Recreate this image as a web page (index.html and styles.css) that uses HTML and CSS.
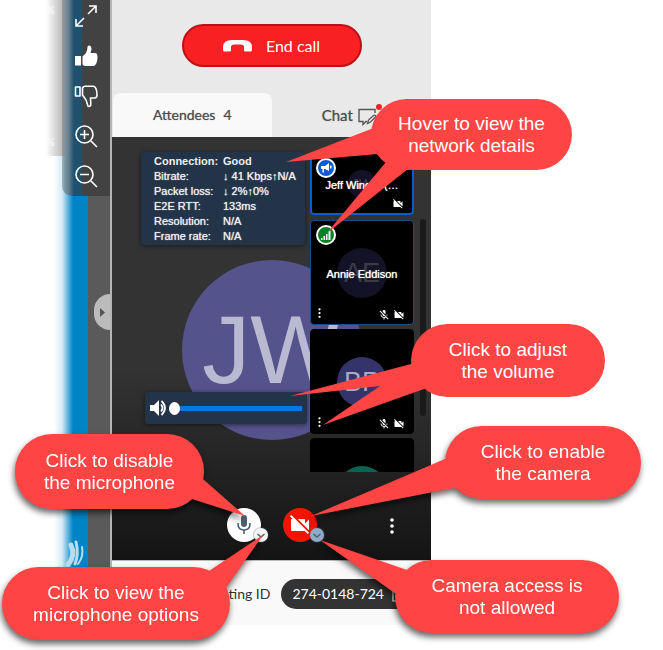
FILE: index.html
```html
<!DOCTYPE html>
<html lang="en">
<head>
<meta charset="utf-8">
<title>Meeting attendees</title>
<link rel="stylesheet" href="styles.css">
</head>
<body>
<svg class="defs" width="0" height="0" aria-hidden="true">
  <symbol id="cam-off" viewBox="0 0 24 24"><path fill="currentColor" d="M21 6.5l-4 4V7c0-.55-.45-1-1-1H9.82L21 17.18V6.500zM3.270 2L2 3.270 4.730 6H4c-.55 0-1 .45-1 1v10c0 .55.45 1 1 1h12c.21 0 .39-.08.54-.18L19.730 21 21 19.730 3.270 2z"/></symbol>
  <symbol id="mic-off" viewBox="0 0 24 24"><path fill="currentColor" d="M19 11h-1.700c0 .74-.16 1.430-.43 2.050l1.230 1.230c.56-.98.9-2.090.9-3.280zm-4.020.17c0-.06.02-.11.02-.17V5c0-1.660-1.340-3-3-3S9 3.340 9 5v.18l5.980 5.990zM4.270 3L3 4.270l6.010 6.010V11c0 1.660 1.330 3 2.990 3 .22 0 .44-.03.65-.08l1.660 1.660c-.71.33-1.500.52-2.310.52-2.760 0-5.300-2.100-5.300-5.100H5c0 3.410 2.720 6.230 6 6.720V21h2v-3.280c.91-.13 1.770-.45 2.540-.9L19.730 21 21 19.730 4.270 3z"/></symbol>
  <symbol id="dots" viewBox="0 0 4 16"><circle cx="2" cy="2" r="1.800" fill="currentColor"/><circle cx="2" cy="8" r="1.800" fill="currentColor"/><circle cx="2" cy="14" r="1.800" fill="currentColor"/></symbol>
  <symbol id="chev" viewBox="0 0 14 14"><path d="M3.500 6L7 9l3.500-3" fill="none" stroke="currentColor" stroke-width="1.500"/></symbol>
</svg>
<main class="figure">
  <section class="share" aria-label="Shared screen">
    <div class="share-top"><span>%</span><span>%</span></div>
    <div class="share-bottom" aria-hidden="true">
      <svg class="swirl" width="24" height="30" viewBox="0 0 24 30"><g fill="none" stroke="#b9ddef" stroke-linecap="round"><path d="M7 6q5 10-3 20" stroke-width="5"/><path d="M12 3q3 12-1 22" stroke-width="3"/><path d="M18 8q2 9-4 17" stroke-width="2"/></g></svg>
    </div>
    <div class="tools">
      <button type="button" aria-label="Full screen"><svg width="24" height="24" viewBox="0 0 24 24" fill="none" stroke="#fff" stroke-width="1.600"><path d="M14 10l8-8M15 2h7v7M10 14l-8 8M2 15v7h7"/></svg></button>
      <button type="button" aria-label="Like"><svg width="24" height="24" viewBox="0 0 24 24" fill="#fff"><path d="M1 12h6v9.500H1zM8.500 12.500L12 9q1.500-3 1.500-6 0-1.500 1.500-1.500 2.500 0 2.500 4L16.500 9H21q2.500 0 2.500 4 0 5.500-2.500 8.200-.5.800-2 .8h-8q-1 0-2.500-1.500z"/></svg></button>
      <button type="button" aria-label="Dislike"><svg width="24" height="24" viewBox="0 0 24 24" fill="none" stroke="#fff" stroke-width="1.600" stroke-linejoin="round"><path d="M1.500 3h4.500v9H1.500zM8.500 11V4q1-1.800 2.500-1.800h8.500q3.500 1 3.500 8.800 0 2.500-2 3h-4.500l.3 6q0 2.500-2 2.500-1 0-1.500-2.500-.8-4-3-6.500z"/></svg></button>
      <button type="button" aria-label="Zoom in"><svg width="24" height="24" viewBox="0 0 24 24" fill="none" stroke="#fff" stroke-width="1.600"><circle cx="10.500" cy="10.500" r="8.500"/><path d="M17 17l6 6M6 10.500h9M10.500 6v9"/></svg></button>
      <button type="button" aria-label="Zoom out"><svg width="24" height="24" viewBox="0 0 24 24" fill="none" stroke="#fff" stroke-width="1.600"><circle cx="10.500" cy="10.500" r="8.500"/><path d="M17 17l6 6M6 10.500h9"/></svg></button>
    </div>
    <button type="button" class="handle" aria-label="Collapse panel"><svg width="5" height="9" viewBox="0 0 5 9"><path d="M0 0l5 4.500L0 9z" fill="#555"/></svg></button>
  </section>

  <section class="panel" aria-label="Meeting">
    <header class="top">
      <button type="button" class="end-call"><svg width="29" height="12" viewBox="0 0 29 12"><path d="M0 10V7Q0 0 9 0h11q9 0 9 7v3q0 1.500-1.500 1.500H22q-1 0-1-1.500V6q-1-1.500-3-1.500h-7Q9 4.500 8 6v4q0 1.500-1 1.500H1.500Q0 11.500 0 10z" fill="#fff"/></svg>End call</button>
      <nav class="tabs">
        <button type="button" class="tab active">Attendees <span>4</span></button>
        <button type="button" class="tab">Chat
          <svg width="24" height="22" viewBox="0 0 24 22"><path d="M17 9V5.500H1v12h4v3l3-3h1" fill="none" stroke="#555" stroke-width="1.400"/><path d="M9.500 19.500l1-3.500 5-4.500q2-1 2.500 1l-5.500 5.500z" fill="none" stroke="#555" stroke-width="1.300"/><circle cx="21" cy="3" r="3" fill="#f82022"/></svg>
        </button>
      </nav>
    </header>

    <div class="video">
      <div class="speaker">JW</div>
      <div class="stage">
        <div class="left">
          <table class="stats">
            <tr class="lead"><th scope="row">Connection:</th><td>Good</td></tr>
            <tr><th scope="row">Bitrate:</th><td>↓ 41 Kbps↑N/A</td></tr>
            <tr><th scope="row">Packet loss:</th><td>↓ 2%↑0%</td></tr>
            <tr><th scope="row">E2E RTT:</th><td>133ms</td></tr>
            <tr><th scope="row">Resolution:</th><td>N/A</td></tr>
            <tr><th scope="row">Frame rate:</th><td>N/A</td></tr>
          </table>
          <label class="volume">
            <svg width="18" height="16" viewBox="0 0 18 16"><path d="M0 5h4l5-5v16l-5-5H0z" fill="#fff"/><path d="M11 4.500q3 3.500 0 7M11.500 1q7 7 0 14" fill="none" stroke="#fff" stroke-width="1.800"/></svg>
            <input type="range" min="0" max="100" value="0" aria-label="Volume">
          </label>
        </div>
        <ul class="tiles">
          <li class="tile short speaking">
            <span class="face dim small">JW</span>
            <span class="badge blue"><svg width="12" height="12" viewBox="0 0 12 12"><path d="M1 4h4l4-3v8L5 7H4v3.500H2.500V7H1zM10 3.500v3h1.500v-3z" fill="#fff"/></svg></span>
            <span class="name">Jeff Winger (…</span>
            <span class="icons"><svg width="12" height="12"><use href="#cam-off"/></svg></span>
          </li>
          <li class="tile outlined">
            <span class="face dim">AE</span>
            <span class="badge green"><svg width="10" height="9" viewBox="0 0 10 9"><path d="M0 7h1.500v2H0zM2.500 5H4v4H2.500zM5 3h1.500v6H5zM7.500 0H9.500v9h-2z" fill="#fff"/></svg></span>
            <span class="name">Annie Eddison</span>
            <button type="button" class="more" aria-label="More for Annie Eddison"><svg width="3" height="10"><use href="#dots"/></svg></button>
            <span class="icons"><svg width="12" height="12"><use href="#mic-off"/></svg><svg width="12" height="12"><use href="#cam-off"/></svg></span>
          </li>
          <li class="tile">
            <span class="face">BP</span>
            <button type="button" class="more" aria-label="More for BP"><svg width="3" height="10"><use href="#dots"/></svg></button>
            <span class="icons"><svg width="12" height="12"><use href="#mic-off"/></svg><svg width="12" height="12"><use href="#cam-off"/></svg></span>
          </li>
          <li class="tile"><span class="face teal"></span></li>
        </ul>
        <div class="scrollbar"></div>
      </div>
      <div class="controls">
        <div class="control">
          <button type="button" class="round mic" aria-label="Microphone"><svg width="16" height="20" viewBox="0 0 16 20"><rect x="5" y="0" width="6" height="12" rx="3" fill="#4d6172"/><path d="M2 8v1q0 6 6 6t6-6V8M8 15v4" fill="none" stroke="#4d6172" stroke-width="1.600"/></svg></button>
          <button type="button" class="options" aria-label="Microphone options"><svg width="14" height="14"><use href="#chev"/></svg></button>
        </div>
        <div class="control">
          <button type="button" class="round cam" aria-label="Camera"><svg width="24" height="24"><use href="#cam-off"/></svg></button>
          <button type="button" class="options locked" aria-label="Camera options"><svg width="14" height="14"><use href="#chev"/></svg></button>
        </div>
        <button type="button" class="menu" aria-label="More options"><svg width="4" height="16"><use href="#dots"/></svg></button>
      </div>
    </div>

    <footer class="foot">
      <span>Meeting ID</span>
      <button type="button" class="id">274-0148-724 <svg width="14" height="16" viewBox="0 0 14 16" fill="none" stroke="#fff" stroke-width="1.200"><path d="M13 13V1H4M1 3v12h9V3z"/></svg></button>
    </footer>
  </section>

  <p class="callout hover"><svg width="1" height="1"><path d="M0 30L-85 63 7 55 15 63-45 135 37 70 60 30z"/></svg><span>Hover to view the<br>network details</span></p>
  <p class="callout adjust"><svg width="1" height="1"><path d="M0 40L-121 72-31 62-88 101 13 65 40 40z"/></svg><span>Click to adjust<br>the volume</span></p>
  <p class="callout shaded disable"><svg width="1" height="1"><path d="M150 40L188 45 230 82 177 65z"/></svg><span>Click to disable<br>the microphone</span></p>
  <p class="callout shaded enable"><svg width="1" height="1"><path d="M40 30L0 33-134 90 9 62z"/></svg><span>Click to enable<br>the camera</span></p>
  <p class="callout shaded options-note"><svg width="1" height="1"><path d="M180 30L207 4 261-32 224 21z"/></svg><span>Click to view the<br>microphone options</span></p>
  <p class="callout shaded access"><svg width="1" height="1"><path d="M40 30L12 10-75-20 1 34z"/></svg><span>Camera access is<br>not allowed</span></p>
</main>
</body>
</html>
```
FILE: styles.css
```css
* { box-sizing: border-box; }

body {
  margin: 0;
  background: #fff;
  font: 14px/20px Lato, "Open Sans", sans-serif;
  color: #333;
}

button {
  padding: 0;
  border: 0;
  background: none;
  color: inherit;
  font: inherit;
}

svg { display: block; flex: none; }
.defs { position: absolute; }

.figure {
  position: relative;
  display: flex;
  align-items: stretch;
  padding-right: 232px;
  padding-bottom: 25px;
}

/* Shared screen on the left */
.share {
  position: relative;
  display: flex;
  flex-direction: column;
  width: 112px;
  border-right: 2px solid #b5b5b5;
}

.share-top {
  display: flex;
  flex-direction: column;
  justify-content: space-between;
  height: 156px;
  padding: 0 0 4px 46px;
  background: linear-gradient(90deg, #fff 46px, #c4c4c4 60px, #b5b5b5 64px);
  color: #fff;
  font-size: 11px;
}

.share-bottom {
  display: flex;
  flex: 1;
  align-items: flex-end;
  padding: 0 0 56px 64px;
  background: linear-gradient(90deg, #fff 54px, #d5ebf6 62px, #0084c6 73px, #0084c6 88px, #5a5a5a 88px);
}

.tools {
  position: absolute;
  top: 0;
  right: 0;
  display: flex;
  flex-direction: column;
  align-items: center;
  gap: 16px;
  width: 48px;
  padding: 4px 0 8px;
  border-radius: 0 0 0 10px;
  background: linear-gradient(90deg, rgba(120, 130, 135, .5), #6b8494 6px, #1f506e 12px, #1f506e 20px, #424242 20px);
}

.handle {
  position: absolute;
  top: 294px;
  right: 0;
  display: flex;
  align-items: center;
  width: 16px;
  height: 36px;
  padding-left: 6px;
  border-radius: 18px 0 0 18px;
  background: #bbb;
}

/* Meeting panel */
.panel {
  display: flex;
  flex: 1;
  flex-direction: column;
  min-width: 0;
}

.top {
  display: flex;
  flex-direction: column;
  align-items: center;
  gap: 26px;
  padding-top: 24px;
  background: #e9e9e9;
}

.end-call {
  display: flex;
  align-items: center;
  justify-content: center;
  gap: 14px;
  width: 180px;
  height: 43px;
  border: 2px solid #c01015;
  border-radius: 22px;
  background: #f82022;
  color: #fff;
  font-size: 16px;
}

.tabs { display: flex; width: 100%; }

.tab {
  display: flex;
  flex: 1;
  align-items: center;
  justify-content: center;
  gap: 5px;
  height: 44px;
  color: #4d4d4d;
  font-size: 15px;
  text-shadow: 0 0 1px #888;
}

.tab.active {
  gap: 8px;
  margin: 0 1px;
  border-radius: 8px 8px 0 0;
  background: #f9f9f9;
  font-size: 14px;
}

.video {
  position: relative;
  background: linear-gradient(#333 55%, #141414);
}

.speaker {
  position: absolute;
  top: 123px;
  left: 50%;
  width: 180px;
  height: 180px;
  margin-left: -90px;
  border-radius: 50%;
  background: #54538b;
  color: #b9b9d2;
  font: 96px/180px "Liberation Sans", Arial, sans-serif;
  text-align: center;
}

.stage {
  position: relative;
  display: flex;
  padding: 15px 5px 0 29px;
  font-family: "Liberation Sans", Arial, sans-serif;
}

.left {
  display: flex;
  flex: 1;
  flex-direction: column;
  justify-content: space-between;
  padding: 0 3px 48px 0;
}

.stats {
  width: 164px;
  padding: 2px 0 1px 13px;
  border-radius: 4px;
  border-spacing: 0;
  background: #233448;
  box-shadow: 0 1px 5px rgba(0, 0, 0, .5);
  color: #eee;
  font-size: 11px;
  line-height: 15px;
  white-space: nowrap;
}

.stats th, .stats td {
  padding: 0;
  font-weight: 400;
  text-align: left;
  text-shadow: 0 0 1px #eee;
}

.stats th { width: 69px; }
.stats .lead th, .stats .lead td { font-weight: 700; text-shadow: none; }

.volume {
  display: flex;
  align-items: center;
  gap: 1px;
  height: 32px;
  margin: 0 0 0 4px;
  padding: 0 5px;
  border-radius: 3px;
  background: #233448;
  box-shadow: 0 1px 5px rgba(0, 0, 0, .5);
}

.volume input {
  flex: 1;
  min-width: 0;
  height: 14px;
  margin: 0;
  border-radius: 3px;
  appearance: none;
  background: linear-gradient(#0878de, #0878de) 4px center / 100% 5px no-repeat;
}

.volume input::-webkit-slider-thumb {
  width: 11px;
  height: 13px;
  border-radius: 50%;
  appearance: none;
  background: #fff;
}

.tiles {
  display: flex;
  flex-direction: column;
  gap: 4px;
  width: 104px;
  height: 320px;
  margin: 0;
  padding: 0;
  overflow: hidden;
  list-style: none;
}

.tile {
  position: relative;
  display: flex;
  flex: none;
  align-items: center;
  justify-content: center;
  height: 105px;
  border: 1px solid #000;
  border-radius: 4px;
  background: #000;
  color: #fff;
}

.tile.short { height: 63px; margin-bottom: 1px; }
.tile.speaking { border: 2px solid #0b5ccc; }
.tile.outlined { border-color: #1c4a86; }

.face {
  width: 50px;
  height: 50px;
  border-radius: 50%;
  background: #34336a;
  color: #a9a9c2;
  font-size: 27px;
  line-height: 50px;
  text-align: center;
}

.face.dim { background: #131226; color: #3c3c46; }
.face.small { width: 28px; height: 28px; font-size: 15px; line-height: 28px; }
.face.teal { background: #066653; }

.name {
  position: absolute;
  inset: 50% 0 auto;
  margin-top: -6px;
  font-size: 11px;
  line-height: 14px;
  text-align: center;
  text-shadow: 0 0 1px #fff;
  white-space: nowrap;
}

.badge {
  position: absolute;
  top: 4px;
  left: 5px;
  display: flex;
  align-items: center;
  justify-content: center;
  width: 20px;
  height: 20px;
  border: 2px solid #fff;
  border-radius: 50%;
}

.speaking .badge { left: 4px; }
.blue { background: #0b5ccc; }
.green { background: #078021; }

.more { position: absolute; bottom: 6px; left: 7px; }

.icons {
  position: absolute;
  right: 8px;
  bottom: 3px;
  display: flex;
  gap: 3px;
}

.scrollbar {
  width: 6px;
  height: 197px;
  margin: 67px 0 0 6px;
  border-radius: 3px;
  background: #1a1a1a;
}

.controls {
  position: relative;
  display: flex;
  align-items: center;
  justify-content: center;
  gap: 22px;
  height: 88px;
  padding-top: 18px;
}

.control { position: relative; width: 34px; height: 34px; }

.round {
  display: flex;
  align-items: center;
  justify-content: center;
  width: 34px;
  height: 34px;
  border-radius: 50%;
}

.mic { background: #fff; }
.cam { background: #f31400; color: #fff; }

.options {
  position: absolute;
  right: -7px;
  bottom: 0;
  border-radius: 50%;
  background: #f5f5f5;
  box-shadow: 0 0 0 1px rgba(80, 100, 120, .3);
  color: #4d6172;
}

.options.locked { background: #8fabc8; }

.menu { position: absolute; top: 46px; right: 37px; color: #fff; }

.foot {
  display: flex;
  align-items: center;
  justify-content: flex-end;
  gap: 11px;
  height: 65px;
  padding: 2px 14px 0 0;
  border-top: 1px solid #bbb;
  background: #f9f9f9;
}

.id {
  display: flex;
  align-items: center;
  gap: 8px;
  height: 30px;
  padding: 0 11px;
  border-radius: 15px;
  background: #333;
  color: #fff;
}

/* Callouts */
.callout {
  position: absolute;
  display: flex;
  align-items: center;
  justify-content: center;
  height: 73px;
  margin: 0;
  border-radius: 37px;
  background: #ff4444;
  color: #fff;
  font: 19px/22px "Liberation Sans", Arial, sans-serif;
  text-align: center;
}

.callout svg {
  position: absolute;
  top: 0;
  left: 0;
  overflow: visible;
  fill: #ff4444;
}

.callout span { position: relative; white-space: nowrap; }
.shaded { filter: drop-shadow(-1px 4px 3px rgba(0, 0, 0, .6)); }

.hover { top: 99px; left: 371px; width: 201px; height: 71px; }
.adjust { top: 324px; left: 411px; width: 194px; }
.disable { top: 434px; left: 15px; width: 189px; height: 75px; }
.enable { top: 426px; left: 445px; width: 196px; }
.options-note { top: 567px; left: 2px; width: 228px; }
.access { top: 560px; left: 395px; width: 224px; }
```
